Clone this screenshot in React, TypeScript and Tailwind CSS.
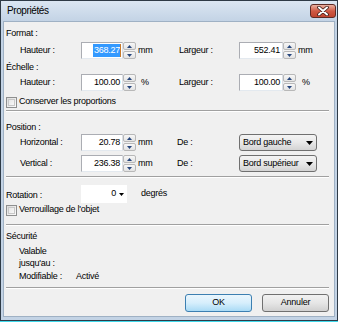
import React from "react";

const Spin = () => (
  <div className="flex flex-col gap-px w-[13px] h-[17px]">
    <div className="flex-1 flex items-center justify-center border border-[#b8b8b8] rounded-[2px] bg-gradient-to-b from-[#f7f7f7] to-[#e3e3e3]">
      <svg width="5" height="3" viewBox="0 0 5 3">
        <path d="M0 3 L2.5 0 L5 3Z" fill="#27467c" />
      </svg>
    </div>
    <div className="flex-1 flex items-center justify-center border border-[#b8b8b8] rounded-[2px] bg-gradient-to-b from-[#f7f7f7] to-[#e3e3e3]">
      <svg width="5" height="3" viewBox="0 0 5 3">
        <path d="M0 0 L2.5 3 L5 0Z" fill="#27467c" />
      </svg>
    </div>
  </div>
);

const Field = ({ value, w, selected }: { value: string; w: string; selected?: boolean }) => (
  <div
    className={`h-[17px] ${w} bg-white border border-[#abadb3] border-r-[#dbdfe6] border-b-[#e3e9ef] flex items-center justify-end pr-[1px]`}
  >
    {selected ? (
      <>
        <span className="bg-[#3399ff] text-white h-[13px] leading-[13px] pl-[1px]">{value}</span>
        <span className="w-px h-[13px] bg-[#c87a2a]" />
      </>
    ) : (
      <span className="pr-[1px]">{value}</span>
    )}
  </div>
);

const Select = ({ value }: { value: string }) => (
  <div className="w-[78px] h-[17px] border border-[#707070] rounded-[3px] bg-gradient-to-b from-[#f4f4f4] via-[#e8e8e8] to-[#d3d3d3] flex items-center pl-[3px] pr-[3px]">
    <span className="flex-1">{value}</span>
    <svg width="7" height="4" viewBox="0 0 7 4">
      <path d="M0 0 L7 0 L3.5 4Z" fill="#000" />
    </svg>
  </div>
);

const Check = ({ label }: { label: string }) => (
  <div className="flex items-center h-[12px] pl-[2px]">
    <div className="w-[11px] h-[11px] border border-[#8e8f8f] bg-gradient-to-br from-[#dcdcdc] to-[#fbfbfb] p-px">
      <div className="w-full h-full border border-[#c8c8c8] bg-gradient-to-br from-[#e6e6e6] to-[#f8f8f8]" />
    </div>
    <span className="ml-[2px]">{label}</span>
  </div>
);

const Sep = ({ mt }: { mt: string }) => (
  <div className={`${mt} ml-[2px] mr-[5px] h-[2px] border-t border-[#a0a0a0] border-b border-b-white`} />
);

export default function App() {
  return (
    <div className="w-[338px] h-[322px] flex flex-col font-['Liberation_Sans',Arial,sans-serif] text-[9px] tracking-[-0.25px] text-black">
      <div className="h-[321px] flex flex-col border border-[#2e3a46] bg-[#c3d3e5]">
        {/* title bar */}
        <div className="h-[20px] flex items-start bg-gradient-to-b from-[#dbe6f2] to-[#c3d3e5]">
          <span className="pl-[6px] pt-[4px] text-[10px] tracking-[-0.4px] leading-[12px]">Propriétés</span>
          <div className="flex-1" />
          <div className="mt-[3px] mr-[1px] w-[26px] h-[14px] rounded-[3px] border border-[#5e2a24] bg-gradient-to-b from-[#e9b1a2] via-[#cf5a45] to-[#c0452f] flex items-center justify-center">
            <svg width="12" height="10" viewBox="0 0 12 10">
              <path d="M2 1.5 L10 8.5 M10 1.5 L2 8.5" stroke="#3a1a16" strokeWidth="3.6" strokeLinecap="round" />
              <path d="M2 1.5 L10 8.5 M10 1.5 L2 8.5" stroke="#ffffff" strokeWidth="2" strokeLinecap="round" />
            </svg>
          </div>
        </div>
        {/* content */}
        <div className="flex-1 mx-[2px] mb-[3px] border border-[#9fb1c4] bg-[#f0f0f0] flex flex-col">
          <div className="pt-[5px] pl-[2px] h-[17px] flex items-end">
            <span className="h-[12px] leading-[12px]">Format :</span>
          </div>
          <div className="mt-[3px] flex items-center h-[17px] pl-[16px]">
            <span className="w-[61px]">Hauteur :</span>
            <Field w="w-[42px]" value="368.27" selected />
            <Spin />
            <span className="w-[43px] pl-[2px]">mm</span>
            <span className="w-[60px]">Largeur :</span>
            <Field w="w-[44px]" value="552.41" />
            <Spin />
            <span className="pl-[2px]">mm</span>
          </div>
          <div className="mt-[3px] h-[12px] flex items-center pl-[2px]">Échelle :</div>
          <div className="flex items-center h-[17px] pl-[16px]">
            <span className="w-[61px]">Hauteur :</span>
            <Field w="w-[42px]" value="100.00" />
            <Spin />
            <span className="w-[43px] pl-[5px]">%</span>
            <span className="w-[60px]">Largeur :</span>
            <Field w="w-[44px]" value="100.00" />
            <Spin />
            <span className="pl-[6px]">%</span>
          </div>
          <div className="mt-[5px]">
            <Check label="Conserver les proportions" />
          </div>
          <Sep mt="mt-[2px]" />
          <div className="mt-[10px] h-[12px] flex items-center pl-[2px]">Position :</div>
          <div className="flex items-center h-[17px] pl-[16px]">
            <span className="w-[61px]">Horizontal :</span>
            <Field w="w-[42px]" value="20.78" />
            <Spin />
            <span className="w-[41px] pl-[2px]">mm</span>
            <span className="w-[62px]">De :</span>
            <Select value="Bord gauche" />
          </div>
          <div className="mt-[4px] flex items-center h-[17px] pl-[16px]">
            <span className="w-[61px]">Vertical :</span>
            <Field w="w-[42px]" value="236.38" />
            <Spin />
            <span className="w-[41px] pl-[2px]">mm</span>
            <span className="w-[62px]">De :</span>
            <Select value="Bord supérieur" />
          </div>
          <Sep mt="mt-[4px]" />
          <div className="mt-[7px] flex items-center h-[18px] pl-[2px]">
            <span className="w-[75px] pt-[4px]">Rotation :</span>
            <div className="w-[46px] h-[18px] bg-white flex items-center justify-end pr-[3px]">
              <span>0</span>
              <svg className="ml-[3px]" width="5" height="3" viewBox="0 0 5 3">
                <path d="M0 0 L5 0 L2.5 3Z" fill="#000" />
              </svg>
            </div>
            <span className="ml-[14px]">degrés</span>
          </div>
          <div className="mt-[1px]">
            <Check label="Verrouillage de l'objet" />
          </div>
          <Sep mt="mt-[8px]" />
          <div className="mt-[5px] h-[12px] flex items-center pl-[2px]">Sécurité</div>
          <div className="mt-[3px] h-[12px] flex items-center pl-[15px]">Valable</div>
          <div className="h-[12px] flex items-center pl-[15px]">jusqu'au :</div>
          <div className="mt-[1px] h-[12px] flex items-center pl-[15px]">
            <span className="w-[57px]">Modifiable :</span>
            <span>Activé</span>
          </div>
          <Sep mt="mt-[4px]" />
          <div className="mt-[5px] flex justify-end gap-[10px] pr-[5px]">
            <div className="w-[67px] h-[18px] rounded-[3px] border border-[#3c7fb1] bg-gradient-to-b from-[#eaf6fd] via-[#d6eefc] to-[#a9daf5] flex items-center justify-center">
              OK
            </div>
            <div className="w-[67px] h-[18px] rounded-[3px] border border-[#707070] bg-gradient-to-b from-[#f2f2f2] via-[#e6e6e6] to-[#d0d0d0] flex items-center justify-center">
              Annuler
            </div>
          </div>
        </div>
      </div>
      <div className="h-px bg-[#3fd8ea]" />
    </div>
  );
}
